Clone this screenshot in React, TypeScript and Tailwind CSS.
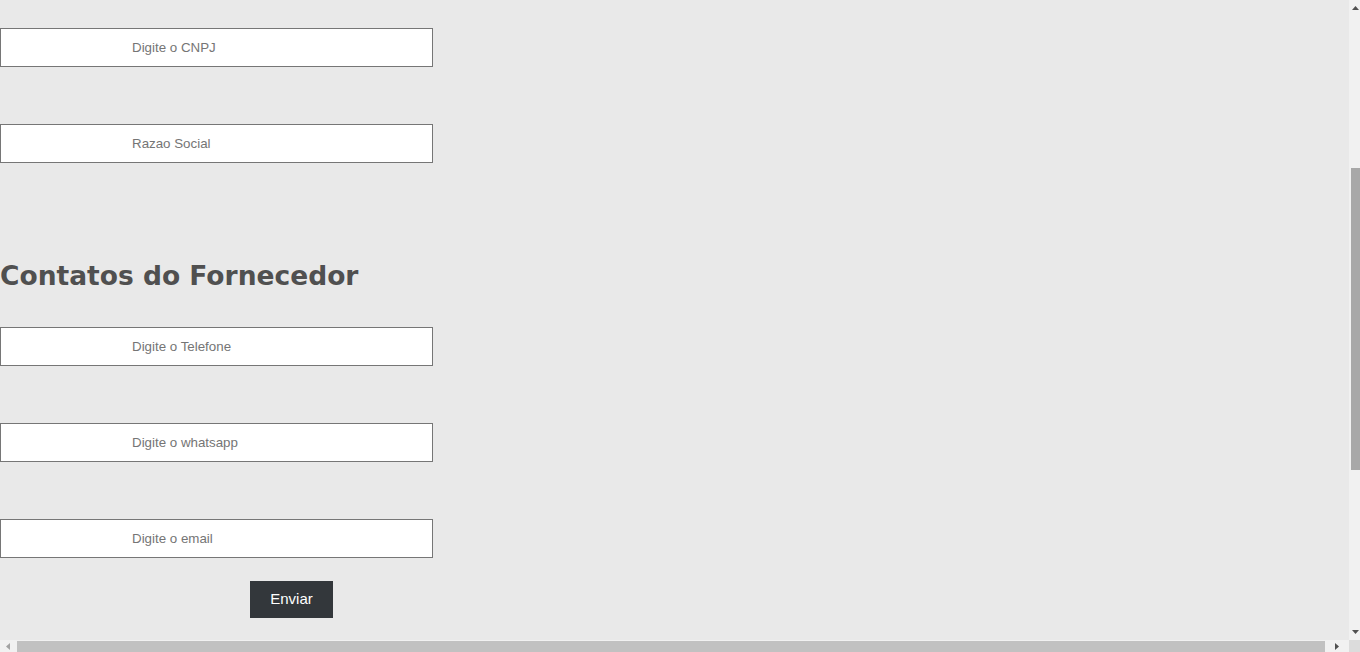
import React from "react";

function Field({ placeholder }: { placeholder: string }) {
  return (
    <input
      type="text"
      placeholder={placeholder}
      className="block h-[39px] w-[433px] border border-[#767676] bg-white pl-[131px] text-[13.33px] text-[#333] placeholder:text-[#757575] outline-none"
      style={{ fontFamily: '"Liberation Sans", Arial, sans-serif' }}
    />
  );
}

export default function App() {
  return (
    <div className="flex h-[652px] w-[1360px] flex-col overflow-hidden bg-[#e9e9e9]">
      <div className="flex h-[640px] w-full">
        <div className="flex-1 pt-[28px]">
          <Field placeholder="Digite o CNPJ" />
          <div className="mt-[57px]">
            <Field placeholder="Razao Social" />
          </div>
          <h2
            className="mt-[96px] h-[34px] text-[26.5px] font-bold leading-[34px] text-[#505050]"
            style={{ fontFamily: '"DejaVu Sans", Verdana, sans-serif' }}
          >
            Contatos do Fornecedor
          </h2>
          <div className="mt-[34px]">
            <Field placeholder="Digite o Telefone" />
          </div>
          <div className="mt-[57px]">
            <Field placeholder="Digite o whatsapp" />
          </div>
          <div className="mt-[57px]">
            <Field placeholder="Digite o email" />
          </div>
          <div className="mt-[23px] pl-[250px]">
            <button
              className="h-[37px] w-[83px] bg-[#33373b] text-[15px] text-white"
              style={{ fontFamily: '"Liberation Sans", Arial, sans-serif' }}
            >
              Enviar
            </button>
          </div>
        </div>
        <div className="flex w-[11px] flex-col bg-[#f1f1f1]">
          <div className="flex h-[16px] items-center justify-center pl-[2px]">
            <svg width="7" height="5" viewBox="0 0 7 5">
              <polygon points="3.5,0 7,4 0,4" fill="#505050" />
            </svg>
          </div>
          <div className="h-[152px]" />
          <div className="ml-[2px] h-[302px] bg-[#a8a8a8]" />
          <div className="flex-1" />
          <div className="flex h-[16px] items-center justify-center pl-[2px]">
            <svg width="7" height="5" viewBox="0 0 7 5">
              <polygon points="0,0 7,0 3.5,4" fill="#505050" />
            </svg>
          </div>
        </div>
      </div>
      <div className="flex h-[12px] w-full bg-[#f1f1f1]">
        <div className="flex w-[17px] items-center justify-center">
          <svg width="5" height="7" viewBox="0 0 5 7">
            <polygon points="4,0 4,7 0,3.5" fill="#a3a3a3" />
          </svg>
        </div>
        <div className="mt-[1px] w-[1308px] bg-[#c1c1c1]" />
        <div className="flex flex-1 items-center justify-center">
          <svg width="5" height="7" viewBox="0 0 5 7">
            <polygon points="0,0 4,3.5 0,7" fill="#505050" />
          </svg>
        </div>
        <div className="w-[11px] bg-[#dcdcdc]" />
      </div>
    </div>
  );
}
